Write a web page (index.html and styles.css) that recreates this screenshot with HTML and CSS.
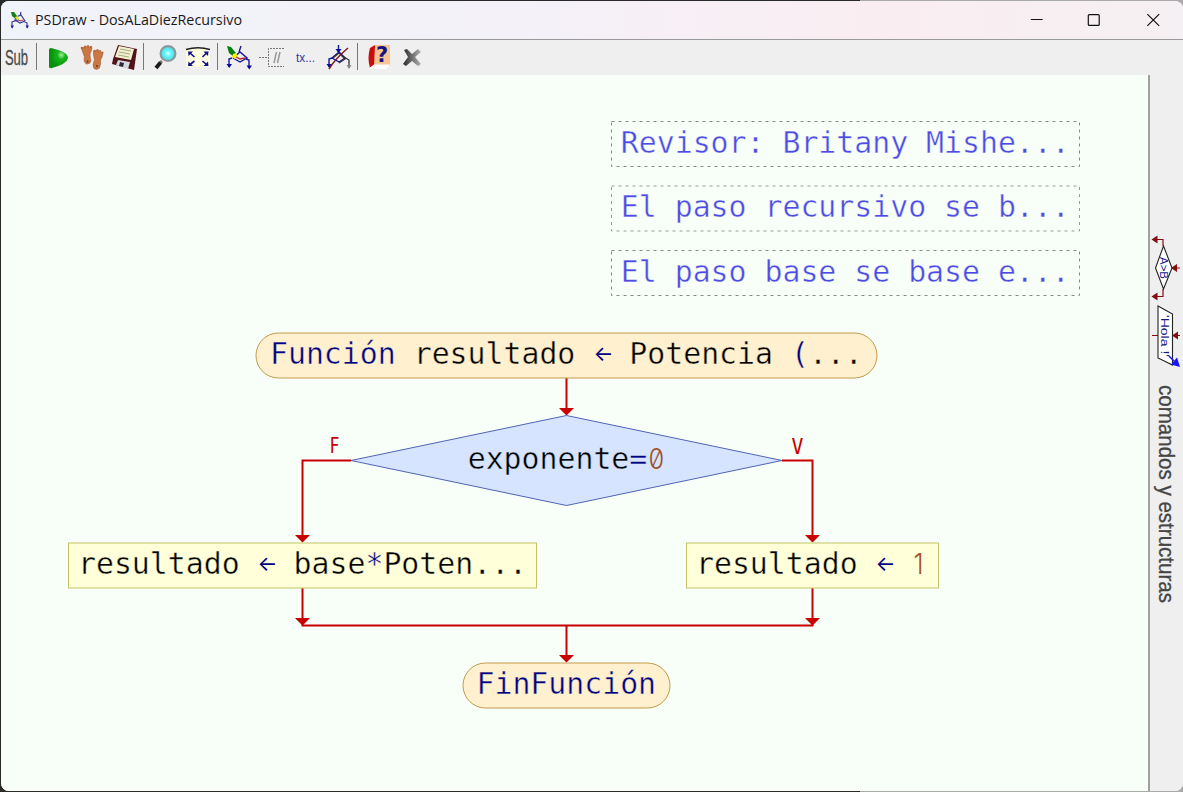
FILE: index.html
```html
<!DOCTYPE html>
<html lang="es">
<head>
<meta charset="utf-8">
<title>PSDraw - DosALaDiezRecursivo</title>
<link rel="stylesheet" href="styles.css">
</head>
<body>
<div class="window">
  <header class="titlebar">
    <svg class="app-icon" viewBox="8 8 24 24"><path d="M12 28V22L18 20M23 21L27 23V28M16 17L21 15 25 21 20 23 15 20ZM20 16L21 12" fill="none" stroke="#3b3f9c" stroke-width="1.2"/><path d="M10.500 25.500h3.500l-1.700 3zM25.500 25.500h3.500l-1.700 3z" fill="#22259c"/><path d="M11 12L14 12 17 16 17 20 12 16Z" fill="#128018"/><path d="M15 17l3-1 1 4-3-1z" fill="#e8e020"/><path d="M18 20l3 1 2-1" stroke="#b03040" fill="none"/></svg>
    <svg class="app-title" viewBox="34 8 212 24"><text x="35" y="25" textLength="207" lengthAdjust="spacingAndGlyphs">PSDraw - DosALaDiezRecursivo</text></svg>
    <div class="window-buttons">
      <svg viewBox="0 0 59 38"><path d="M24 18.500h12"/></svg>
      <svg viewBox="0 0 59 38"><rect x="23.500" y="13.500" width="11" height="11" rx="1"/></svg>
      <svg viewBox="0 0 59 38"><path d="M23.500 13l12 12M35.500 13l-12 12"/></svg>
    </div>
  </header>

  <nav class="toolbar">
    <svg class="tool" viewBox="0 42 33 31"><text class="sub" x="4" y="65.500" textLength="24" lengthAdjust="spacingAndGlyphs">Sub</text></svg>
    <span class="separator"></span>
    <svg class="tool" viewBox="41 42 33 31"><defs><radialGradient id="green" cx=".65" cy=".35" r=".6"><stop offset="0" stop-color="#a4ef9c"/><stop offset=".35" stop-color="#16b51d"/><stop offset="1" stop-color="#078f0d"/></radialGradient></defs><path d="M49 50Q49 47 53 48.500Q68 52 68 58Q67 64 52 68Q48.500 69 49 65Z" fill="url(#green)"/></svg>
    <svg class="tool" viewBox="74 42 33 31"><g fill="#c87745" stroke="#a65a2c" stroke-width=".6"><path d="M81.500 48.500Q86 45 92 47.500Q92 50 90 54Q90 58 91 61Q90 64.500 86.500 64Q83 62 84.500 57Q83 53 81.500 48.500Z"/><path d="M93.500 51Q98 49 103 53Q102.500 57 100.500 60Q101 64 99.500 68Q97 70.500 94 68.500Q92 65 94.500 60Q93 55 93.500 51Z"/></g><g fill="#b86634"><circle cx="82" cy="48" r="1.300"/><circle cx="85" cy="46.500" r="1"/><circle cx="88" cy="46" r="1"/><circle cx="91" cy="46.800" r="1"/><circle cx="94.500" cy="50.800" r="1"/><circle cx="97.500" cy="50" r="1"/><circle cx="100" cy="51" r="1"/><circle cx="102.500" cy="52.500" r="1"/></g><circle cx="87.500" cy="61.500" r="1" fill="#6b381b"/><circle cx="97" cy="66" r="1" fill="#6b381b"/></svg>
    <svg class="tool" viewBox="107 42 33 31"><path d="M118 45L137 49 134 70 112 64 113 59Z" fill="#501317"/><path d="M119 46L134 49 131 60 115 57Z" fill="#f4f0cf"/><path d="M120 49l11 2M119 52l11 2M118 55l11 2" stroke="#a2ae80"/><path d="M118 60L130 62 128 69 116 65Z" fill="#d7d9e0"/><path d="M120 62l4 1-1 4-4-1z" fill="#292938"/></svg>
    <span class="separator"></span>
    <svg class="tool" viewBox="148 42 33 31"><defs><radialGradient id="lens"><stop offset="0" stop-color="#edffff"/><stop offset=".4" stop-color="#65f7fb"/><stop offset="1" stop-color="#4ad9e7"/></radialGradient></defs><path d="M162 61l-2 2" stroke="#777" stroke-width="3"/><path d="M160.500 62.500L156 68" stroke="#1c1c1c" stroke-width="3.800"/><circle cx="168" cy="53.500" r="7.400" fill="url(#lens)" stroke="#8a999c" stroke-width="2.200"/></svg>
    <svg class="tool" viewBox="181 42 33 31"><path d="M186 48h24v19H186z" fill="#fffee0"/><path d="M186 49.500Q198 46 210 49.500" fill="none" stroke="#222" stroke-width="1.600"/><g fill="#11118f" stroke="#11118f"><path d="M188 51.500h5l-4.500 4.500zM208.500 51.500h-5l4.500 4.500zM188 66h5l-4.500-4.500zM208.500 66h-5l4.500-4.500z" stroke="none"/><path d="M190 53l4.500 4M206.500 53l-4 4M190 64.500l4.500-3.500M206.500 64.500l-4-3.500" stroke-width="1.600"/></g></svg>
    <span class="separator"></span>
    <svg class="tool" viewBox="222 42 33 31"><path d="M232 58l-3 1v8M246 59l3 1v8M233 58l7-6 7 6-7 4-7-4M239 52l2-6" fill="none" stroke="#181895" stroke-width="1.400"/><path d="M226.500 64h5.500l-2.700 4zM246.500 65.500h5.500l-2.700 4z" fill="#0c0c9b"/><path d="M227 46l4 1 5 6-2 4-5-4z" fill="#078011"/><path d="M233 54l3-1 2 4-3 2-3-2z" fill="#fff000"/><path d="M236 57l4 2 5-1" fill="none" stroke="#bd2637" stroke-width="1.300"/></svg>
    <svg class="tool" viewBox="255 42 33 31"><path d="M259 57.500h9M284 48.500H268.500V66.500H284" fill="none" stroke="#777" stroke-dasharray="2 1"/><path d="M274 63l2.500-11M277.500 63l2.500-11" stroke="#999" stroke-width="1.500"/></svg>
    <svg class="tool" viewBox="288 42 33 31"><text class="tx" x="296" y="62" textLength="19" lengthAdjust="spacingAndGlyphs">tx...</text></svg>
    <svg class="tool" viewBox="321 42 33 31"><path d="M332 58l-3 1v8M332 58l7-6 6 6-6 4-7-4M338.500 45v7" fill="none" stroke="#181895" stroke-width="1.400"/><path d="M344 57l5 3v8M333 58l6-5 6 6-6 4" stroke="#333" fill="none" stroke-width="1.300"/><path d="M326.500 64h5.500l-2.700 4zM335.500 49h6l-3 4z" fill="#0c0c9b"/><path d="M346.500 65h5l-2.500 4z" fill="#888"/><path d="M329 69Q335 59 348 48" stroke="#7e1721" fill="none" stroke-width="1.500"/></svg>
    <span class="separator"></span>
    <svg class="tool" viewBox="362 42 33 31"><path d="M374 45h16v21H374z" fill="#f9c596"/><path d="M370 48l5-3-1 20-4 3Q367 58 370 48Z" fill="#c90d0d"/><path d="M370 67.500l4-3H390L386 69H370z" fill="#fff"/><text class="question" x="376" y="62">?</text></svg>
    <svg class="tool" viewBox="395 42 33 31"><defs><linearGradient id="steel" x1="0" x2="1"><stop stop-color="#292929"/><stop offset="1" stop-color="#b3b3b3"/></linearGradient></defs><path d="M404 50l3-1 5 5 6-5 3 3-6 5 6 7-3 2-6-5-6 5-3-2 5-7z" fill="url(#steel)"/></svg>
  </nav>

  <main class="workspace">
    <svg class="diagram" viewBox="1 75 1147 716">
      <g class="comment-box"><rect x="611.500" y="121.500" width="468" height="45"/><rect class="soft" x="611.500" y="186" width="468" height="45"/><rect x="611.500" y="250.500" width="468" height="45"/></g>
      <g class="code comment">
        <text x="620.800" y="152.500">Revisor: Britany Mishe...</text>
        <text x="620.800" y="217">El paso recursivo se b...</text>
        <text x="620.800" y="281.500">El paso base se base e...</text>
      </g>

      <g class="flow">
        <path d="M566.500 378V411M351 460.500H302.500V538M782 460.500H812.500V538M302.500 588V625.500H812.500V588M566.500 625V659"/>
      </g>
      <g class="arrowhead">
        <path d="M559 408h15l-7.500 7.500zM295 535h15l-7.500 7.500zM805 535h15l-7.500 7.500zM295 618h15l-7.500 7.500zM805 618h15l-7.500 7.500zM559 655h15l-7.500 7.500z"/>
      </g>
      <rect class="terminal" x="256" y="333" width="621" height="45" rx="22.500"/>
      <path class="decision" d="M566.500 415.500L782 460.500 566.500 505.500 351 460.500Z"/>
      <rect class="process" x="68.500" y="543" width="468" height="45"/>
      <rect class="process" x="686.500" y="543" width="252" height="45"/>
      <rect class="terminal" x="463" y="663" width="207" height="45" rx="22.500"/>

      <text class="code on-terminal" x="270" y="364.300"><tspan class="keyword">Función</tspan> resultado <tspan class="keyword assign" x="593.500" dy="-3">←</tspan><tspan x="629.300" dy="3">Potencia </tspan><tspan class="keyword">(</tspan>...</text>
      <text class="code on-decision" x="467.700" y="468.800">exponente<tspan class="keyword">=</tspan></text>
      <text class="zero" transform="translate(648.500 469) scale(.88 1)">0</text>
      <text class="code on-process" x="78" y="574.300">resultado <tspan class="keyword assign" x="257.500" dy="-3">←</tspan><tspan x="293.600" dy="3">base</tspan><tspan class="keyword">*</tspan>Poten...</text>
      <text class="code on-process" x="696" y="574.300">resultado <tspan class="keyword assign" x="875.500" dy="-3">←</tspan></text>
      <text class="one" transform="translate(913.500 574) scale(.88 1)">1</text>
      <text class="code on-terminal" x="476.500" y="694.300"><tspan class="keyword">FinFunción</tspan></text>
      <text class="branch" transform="translate(329.500 453) scale(.75 1)">F</text>
      <text class="branch" transform="translate(791.500 453.500) scale(.9 1)">V</text>
    </svg>

    <aside class="sidebar">
      <svg viewBox="1150 75 33 716">
        <path d="M1163 246V239.500H1156M1163 289V296.500H1156M1172 268H1180M1172 335.500H1180M1152 335.500H1158" class="side-line"/>
        <path d="M1151.500 239.500l6-4v8zM1151.500 296.500l6-4v8zM1171 268l6-4v8zM1172 335.500l6-4v8z" fill="#850d12"/>
        <path d="M1163.500 246L1172 268 1163.500 289 1155.500 268Z" class="side-shape"/>
        <path d="M1158 306L1172.500 314V365L1158 358Z" class="side-shape"/>
        <text class="side-code" transform="translate(1160 257) rotate(90)" textLength="22" lengthAdjust="spacingAndGlyphs">A&gt;B</text>
        <text class="side-code" transform="translate(1161 315) rotate(90)" textLength="42" lengthAdjust="spacingAndGlyphs">'Hola !'</text>
        <path d="M1169 356l5 5" stroke="#1515ff" stroke-width="1.500"/><path d="M1180 367l-9-2.500 6-7z" fill="#1515ff"/>
        <text class="side-label" transform="translate(1159 385) rotate(90)" textLength="218" lengthAdjust="spacingAndGlyphs">comandos y estructuras</text>
      </svg>
    </aside>
  </main>
</div>
</body>
</html>
```
FILE: styles.css
```css
* { box-sizing: border-box; }
body {
  margin: 0;
  width: 1183px;
  height: 792px;
  padding: 1px 0 1px 1px;
  overflow: hidden;
  background: linear-gradient(90deg, #292929 0 860px, #aaa 860px);
}
svg { display: block; flex: none; }
.window {
  display: flex;
  flex-direction: column;
  height: 790px;
  border-radius: 8px;
  overflow: hidden;
  background: #f8fff8;
}
.titlebar {
  display: flex;
  flex: none;
  height: 39px;
  border-bottom: 1px solid #999;
  background: linear-gradient(90deg, #f1f3fa, #f4f1f8 45%, #faedf1 75%, #f5f0f3);
}
.app-icon { width: 24px; height: 24px; margin: 7px 2px 0 7px; }
.app-title { width: 212px; height: 24px; margin-top: 7px; font: 14px "Open Sans", sans-serif; fill: #191919; }
.window-buttons { display: flex; margin-left: auto; padding-right: 1px; }
.window-buttons svg { width: 58.500px; height: 38px; fill: none; stroke: #111; stroke-width: 1.2; }
.toolbar { display: flex; flex: none; height: 35px; padding-top: 2px; padding-left: 0; background: #efefef; }
.tool { width: 33px; height: 31px; }
.tool:first-child { width: 32px; }
.separator { flex: none; width: 8px; height: 27px; margin-top: 1px; padding-left: 3px; }
.separator::before { content: ""; display: block; width: 1px; height: 27px; background: #777; }
.sub { font: 22.500px "Liberation Sans", sans-serif; fill: #4a4a4a; stroke: #4a4a4a; stroke-width: .3; }
.tx { font: 13.500px "Liberation Sans", sans-serif; fill: #35359b; }
.question { font: bold 21px "DejaVu Sans", sans-serif; fill: #15157d; }
.workspace { display: flex; flex: none; height: 716px; }
.diagram { width: 1147px; height: 716px; background: #f8fff8; }
.sidebar { flex: none; width: 35px; border-left: 2px solid #a0a0a0; background: #efefef; }
.sidebar svg { width: 33px; height: 716px; }

.code { font: 29.830px "DejaVu Sans Mono", monospace; fill: #000; stroke-width: .4px; }
.comment text { fill: #4c4ce4; stroke: #f8fff8; }
.on-terminal { stroke: #fff0cf; }
.on-decision { stroke: #d7e4ff; }
.on-process { stroke: #ffffd9; }
.keyword { fill: #000080; }
.assign { font: 21px Inter, sans-serif; stroke: none; }
.zero, .one { font: 300 29px Inter, sans-serif; font-feature-settings: "zero" 1; fill: #a0522d; }
.branch { font: 22px "DejaVu Sans Mono", monospace; fill: #c80000; }
.comment-box rect { fill: none; stroke: #888; stroke-dasharray: 3 4; }
.comment-box .soft { stroke: #999; }
.terminal { fill: #fff0cf; stroke: #c39a4b; }
.process { fill: #ffffd9; stroke: #c4c365; }
.decision { fill: #d7e4ff; stroke: #4e64b4; }
.flow path { fill: none; stroke: #c80000; stroke-width: 2; }
.arrowhead path { fill: #c80000; }
.side-line { fill: none; stroke: #850d12; stroke-width: 1.2; }
.side-shape { fill: #fff; stroke: #222; stroke-width: 1.1; }
.side-code { font: 11.500px "Liberation Sans", sans-serif; fill: #18188a; }
.side-label { font: 22px "Liberation Sans", sans-serif; fill: #454545; stroke: #454545; stroke-width: .3px; }
```
